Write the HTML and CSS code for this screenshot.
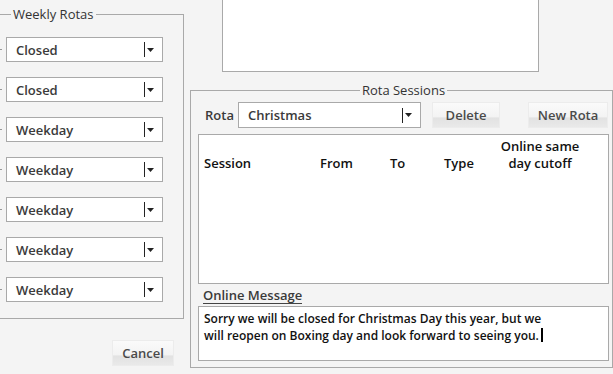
FILE: index.html
```html
<!DOCTYPE html>
<html>
<head>
<meta charset="utf-8">
<link rel="stylesheet" href="styles.css">
</head>
<body>
<div class="page">
  <div class="left">
    <fieldset class="group weekly">
      <legend class="legend weekly-legend">Weekly Rotas</legend>
      <div class="rows">
        <div class="row"><span class="tick"></span><div class="combo"><span class="combo-text">Closed</span><span class="divider"></span><svg class="arrow" width="7" height="4" viewBox="0 0 7 4"><path d="M0 0H7L3.5 4Z" fill="#222"/></svg></div></div>
        <div class="row"><span class="tick"></span><div class="combo"><span class="combo-text">Closed</span><span class="divider"></span><svg class="arrow" width="7" height="4" viewBox="0 0 7 4"><path d="M0 0H7L3.5 4Z" fill="#222"/></svg></div></div>
        <div class="row"><span class="tick"></span><div class="combo"><span class="combo-text">Weekday</span><span class="divider"></span><svg class="arrow" width="7" height="4" viewBox="0 0 7 4"><path d="M0 0H7L3.5 4Z" fill="#222"/></svg></div></div>
        <div class="row"><span class="tick"></span><div class="combo"><span class="combo-text">Weekday</span><span class="divider"></span><svg class="arrow" width="7" height="4" viewBox="0 0 7 4"><path d="M0 0H7L3.5 4Z" fill="#222"/></svg></div></div>
        <div class="row"><span class="tick"></span><div class="combo"><span class="combo-text">Weekday</span><span class="divider"></span><svg class="arrow" width="7" height="4" viewBox="0 0 7 4"><path d="M0 0H7L3.5 4Z" fill="#222"/></svg></div></div>
        <div class="row"><span class="tick"></span><div class="combo"><span class="combo-text">Weekday</span><span class="divider"></span><svg class="arrow" width="7" height="4" viewBox="0 0 7 4"><path d="M0 0H7L3.5 4Z" fill="#222"/></svg></div></div>
        <div class="row"><span class="tick"></span><div class="combo"><span class="combo-text">Weekday</span><span class="divider"></span><svg class="arrow" width="7" height="4" viewBox="0 0 7 4"><path d="M0 0H7L3.5 4Z" fill="#222"/></svg></div></div>
      </div>
    </fieldset>
    <button class="btn cancel">Cancel</button>
  </div>
  <div class="right">
    <div class="preview"></div>
    <fieldset class="group sessions">
      <legend class="legend sessions-legend">Rota Sessions</legend>
      <div class="toolbar">
        <span class="rota-label">Rota</span>
        <div class="combo rota-combo"><span class="combo-text">Christmas</span><span class="divider"></span><svg class="arrow" width="7" height="4" viewBox="0 0 7 4"><path d="M0 0H7L3.5 4Z" fill="#222"/></svg></div>
        <button class="btn delete">Delete</button>
        <button class="btn new-rota">New Rota</button>
      </div>
      <div class="table">
        <div class="thead">
          <span class="th">Session</span>
          <span class="th">From</span>
          <span class="th">To</span>
          <span class="th">Type</span>
          <span class="th th-center">Online same<br>day cutoff</span>
        </div>
      </div>
      <div class="msg-label">Online Message</div>
      <div class="message">Sorry we will be closed for Christmas Day this year, but we<br>will reopen on Boxing day and look forward to seeing you.<span class="caret"></span></div>
    </fieldset>
  </div>
</div>
</body>
</html>
```

FILE: styles.css
```css
* { box-sizing: border-box; }
html, body { margin: 0; padding: 0; }
body {
  width: 613px;
  height: 374px;
  overflow: hidden;
  background: #f4f4f4;
  font-family: "Open Sans", "Liberation Sans", sans-serif;
  font-size: 13px;
  color: #333;
}
.page {
  display: flex;
  align-items: flex-start;
}
.left {
  display: flex;
  flex-direction: column;
  align-items: flex-end;
  margin-left: -10px;
  width: 194px;
  flex: none;
}
.group {
  margin: 0;
  border: 1px solid #a9a9a9;
  min-width: 0;
}
.legend {
  font-size: 13px;
  line-height: 16px;
  padding: 0 2px;
  color: #333;
}
.weekly {
  margin-top: 6px;
  width: 194px;
  padding: 15px 0 16px 9px;
}
.weekly-legend {
  margin-left: 11px;
}
.rows {
  display: flex;
  flex-direction: column;
  gap: 15px;
}
.row {
  display: flex;
  align-items: center;
  gap: 4px;
}
.tick {
  width: 2px;
  height: 1px;
  background: #999;
}
.combo {
  display: flex;
  align-items: center;
  width: 157px;
  height: 25px;
  background: #fff;
  border: 1px solid #a9a9a9;
  padding: 0 8px 0 9px;
}
.combo-text {
  flex: 1;
  color: #3a3a3a;
  font-weight: 600;
  line-height: 16px;
}
.divider {
  width: 1px;
  height: 15px;
  background: #222;
}
.arrow {
  margin-left: 2px;
  display: block;
}
.btn {
  font-family: inherit;
  font-size: 13px;
  font-weight: 600;
  color: #4a4a4a;
  height: 26px;
  border: 1px solid #ececec;
  background: linear-gradient(#fafafa, #f3f3f3 58%, #e2e2e2 62%, #e9e9e9);
  padding: 0;
}
.cancel {
  margin-top: 21px;
  margin-right: 10px;
  width: 62px;
}
.right {
  margin-left: 6px;
  flex: none;
  width: 423px;
}
.preview {
  margin-top: -10px;
  margin-left: 32px;
  width: 317px;
  height: 82px;
  background: #fff;
  border: 1px solid #a9a9a9;
}
.sessions {
  margin-top: 10px;
  width: 423px;
  padding: 4px 3px 6px 7px;
}
.sessions-legend {
  margin-left: auto;
  margin-right: auto;
}
.toolbar {
  display: flex;
  align-items: center;
  height: 26px;
}
.rota-label {
  margin-left: 7px;
  width: 33px;
  font-weight: 600;
  color: #3a3a3a;
}
.rota-combo {
  width: 183px;
  height: 26px;
}
.delete {
  margin-left: 11px;
  width: 68px;
}
.new-rota {
  margin-left: auto;
  margin-right: 1px;
  width: 80px;
}
.table {
  margin-top: 6px;
  width: 411px;
  height: 150px;
  background: #fff;
  border: 1px solid #a9a9a9;
  padding: 3px 0 0 5px;
}
.thead {
  display: grid;
  grid-template-columns: 116px 70px 54px 46px 100px;
  align-items: end;
}
.th {
  font-weight: 600;
  color: #111;
  line-height: 17px;
}
.th-center {
  text-align: center;
}
.msg-label {
  display: inline-block;
  margin: 3px 0 0 5px;
  line-height: 16px;
  font-weight: 600;
  color: #3a3a3a;
  border-bottom: 1px solid #444;
}
.message {
  margin-top: 2px;
  width: 411px;
  height: 55px;
  background: #fff;
  border: 1px solid #a9a9a9;
  padding: 3px 0 0 5px;
  font-size: 12px;
  font-weight: 600;
  color: #111;
  line-height: 17px;
}
.caret {
  display: inline-block;
  width: 2px;
  height: 14px;
  background: #000;
  margin-left: 2px;
  vertical-align: -2px;
}
```
